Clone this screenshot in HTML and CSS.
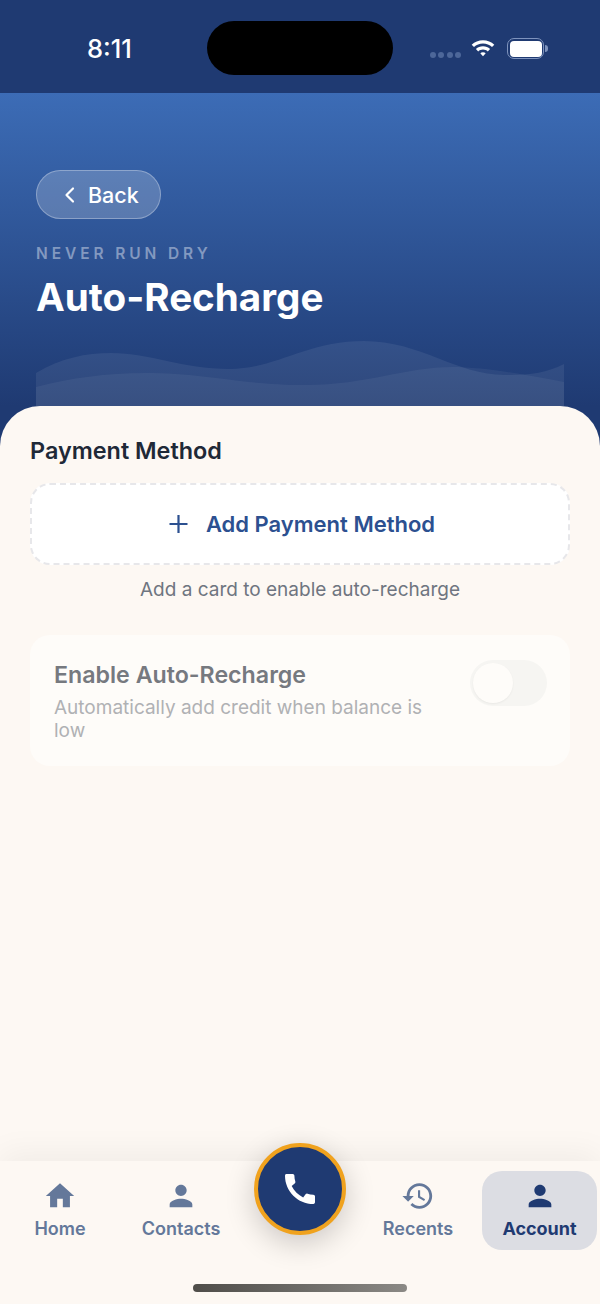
FILE: index.html
```html
<!DOCTYPE html>
<html lang="en">
<head>
    <meta charset="UTF-8">
    <meta name="viewport" content="width=device-width, initial-scale=1.0">
    <title>Auto-Recharge</title>
    <link rel="stylesheet" href="styles.css">
</head>
<body>
    <div class="app">
        <div class="status-bar">
            <span class="status-time">8:11</span>
            <div class="island"></div>
            <div class="status-icons">
                <div class="signal"><i></i><i></i><i></i><i></i></div>
                <svg class="wifi" width="26" height="20" viewBox="0 0 26 20">
                    <path d="M13 2.200c4.400 0 8.400 1.700 11.300 4.500l-2.300 2.400C19.700 6.900 16.500 5.600 13 5.600S6.300 6.900 4 9.100L1.700 6.700C4.600 3.900 8.600 2.200 13 2.200z" fill="#fff"/>
                    <path d="M13 8.300c2.800 0 5.200 1 7.100 2.800l-2.300 2.400c-1.300-1.200-3-1.900-4.800-1.900s-3.500.7-4.800 1.900l-2.300-2.400c1.900-1.800 4.300-2.800 7.100-2.800z" fill="#fff"/>
                    <path d="M13 14.200c1.100 0 2 .4 2.700 1L13 18.200l-2.700-3c.7-.6 1.600-1 2.700-1z" fill="#fff"/>
                </svg>
                <div class="battery"><div class="battery-fill"></div></div>
                <div class="battery-cap"></div>
            </div>
        </div>

        <header class="hero">
            <a class="back-button">
                <svg width="14" height="18" viewBox="0 0 14 18"><path d="M10 2.500 3.500 9l6.500 6.500" fill="none" stroke="#fff" stroke-width="2.200" stroke-linecap="round" stroke-linejoin="round"/></svg>
                <span>Back</span>
            </a>
            <div class="eyebrow">NEVER RUN DRY</div>
            <h1 class="hero-title">Auto-Recharge</h1>
            <svg class="waves" viewBox="0 0 528 66" preserveAspectRatio="none">
                <path d="M0 33C25 18 50 13 75 13c40 0 70 16 119 16 46 0 76-28 134-28 57 0 92 34 141 34 26 0 41-2 59-11v42H0z" fill="#fff" fill-opacity=".07"/>
                <path d="M0 47c35-9 70-14 109-14 61 0 96 12 161 12 60 0 100-18 146-18 34 0 74 8 112 15v24H0z" fill="#fff" fill-opacity=".05"/>
            </svg>
        </header>

        <main class="sheet">
            <h2 class="section-title">Payment Method</h2>
            <button class="add-card">
                <svg width="20" height="20" viewBox="0 0 20 20"><path d="M9.500 1v18M.5 10h18" stroke="#2c5090" stroke-width="2.200" fill="none"/></svg>
                <span>Add Payment Method</span>
            </button>
            <p class="hint">Add a card to enable auto-recharge</p>

            <section class="setting-card">
                <div class="setting-text">
                    <div class="setting-title">Enable Auto-Recharge</div>
                    <div class="setting-desc">Automatically add credit when balance is low</div>
                </div>
                <div class="toggle"><div class="toggle-knob"></div></div>
            </section>
        </main>

        <nav class="tab-bar">
            <a class="tab">
                <svg width="34" height="34" viewBox="0 0 24 24"><path d="M10 20v-6h4v6h5v-8h3L12 3 2 12h3v8z"/></svg>
                <span>Home</span>
            </a>
            <a class="tab">
                <svg width="34" height="34" viewBox="0 0 24 24"><path d="M12 12c2.210 0 4-1.790 4-4s-1.790-4-4-4-4 1.790-4 4 1.790 4 4 4zm0 2c-2.670 0-8 1.340-8 4v2h16v-2c0-2.660-5.330-4-8-4z"/></svg>
                <span>Contacts</span>
            </a>
            <div class="tab-spacer"></div>
            <a class="tab">
                <svg width="34" height="34" viewBox="0 0 24 24"><path d="M13 3c-4.970 0-9 4.030-9 9H1l3.890 3.890.07.140L9 12H6c0-3.870 3.130-7 7-7s7 3.130 7 7-3.130 7-7 7c-1.930 0-3.680-.79-4.940-2.060l-1.420 1.420C8.270 19.990 10.510 21 13 21c4.970 0 9-4.030 9-9s-4.030-9-9-9zm-1 5v5l4.280 2.540.72-1.210-3.500-2.080V8H12z"/></svg>
                <span>Recents</span>
            </a>
            <a class="tab active">
                <svg width="34" height="34" viewBox="0 0 24 24"><path d="M12 12c2.210 0 4-1.790 4-4s-1.790-4-4-4-4 1.790-4 4 1.790 4 4 4zm0 2c-2.670 0-8 1.340-8 4v2h16v-2c0-2.660-5.330-4-8-4z"/></svg>
                <span>Account</span>
            </a>
            <button class="call-button">
                <svg width="40" height="40" viewBox="0 0 24 24"><path d="M20.010 15.380c-1.230 0-2.420-.2-3.530-.56-.35-.12-.74-.03-1.010.24l-1.570 1.970c-2.830-1.350-5.480-3.900-6.890-6.830l1.950-1.660c.27-.28.35-.67.24-1.020-.37-1.110-.56-2.300-.56-3.530 0-.54-.45-.99-.99-.99H4.190C3.650 3 3 3.240 3 3.990 3 13.280 10.730 21 20.010 21c.71 0 .99-.63.99-1.180v-3.450c0-.54-.45-.99-.99-.99z" fill="#fff"/></svg>
            </button>
            <div class="home-indicator"></div>
        </nav>
    </div>
</body>
</html>
```

FILE: styles.css
```css
* {
    box-sizing: border-box;
}

body {
    font-family: Inter, "Liberation Sans", sans-serif;
    background-color: #fdf8f3;
    margin: 0;
}

.app {
    display: flex;
    flex-direction: column;
    width: 600px;
    height: 1304px;
    overflow: hidden;
    position: relative;
}

/* status bar */
.status-bar {
    display: flex;
    align-items: center;
    height: 93px;
    padding: 4px 52px 0 87px;
    background-color: #1f3a72;
    color: #fff;
    position: relative;
}

.status-time {
    font-size: 25.500px;
    font-weight: 500;
    line-height: 30px;
}

.island {
    position: absolute;
    top: 21px;
    left: 207px;
    width: 186px;
    height: 54px;
    border-radius: 27px;
    background-color: #000;
}

.status-icons {
    display: flex;
    align-items: center;
    margin-left: auto;
}

.signal {
    display: flex;
    gap: 2.500px;
    margin-top: 13px;
    margin-right: 9px;
}

.signal i {
    width: 6px;
    height: 6px;
    border-radius: 50%;
    background-color: #4d6799;
}

.wifi {
    margin-right: 11px;
    margin-bottom: 1px;
}

.battery {
    width: 37px;
    height: 21px;
    border: 1.500px solid #7e93bd;
    border-radius: 7px;
    padding: 1.500px;
}

.battery-fill {
    height: 100%;
    border-radius: 4px;
    background-color: #fff;
}

.battery-cap {
    width: 3px;
    height: 7px;
    margin-left: 1px;
    border-radius: 0 3px 3px 0;
    background-color: #7e93bd;
}

/* hero */
.hero {
    height: 360px;
    padding: 77px 36px 0;
    background: linear-gradient(180deg, #3c6cb6 0%, #1f3a72 87%);
    position: relative;
    flex-shrink: 0;
}

.back-button {
    display: inline-flex;
    align-items: center;
    gap: 11px;
    width: 125px;
    height: 49px;
    padding-left: 26px;
    border: 1.500px solid rgba(255, 255, 255, 0.3);
    border-radius: 25px;
    background-color: rgba(255, 255, 255, 0.2);
    color: #fff;
    font-size: 21.500px;
    font-weight: 500;
}

.eyebrow {
    margin-top: 25px;
    color: #8399c0;
    font-size: 15.500px;
    font-weight: 600;
    letter-spacing: 3.900px;
    line-height: 20px;
}

.hero-title {
    margin: 10px 0 0;
    color: #fff;
    font-size: 38.600px;
    font-weight: 700;
    line-height: 46px;
}

.waves {
    position: absolute;
    left: 36px;
    bottom: 47px;
    width: 528px;
    height: 66px;
}

/* sheet */
.sheet {
    flex: 1;
    margin-top: -47px;
    padding: 30px 30px 0;
    border-radius: 40px 40px 0 0;
    background-color: #fdf8f3;
    position: relative;
}

.section-title {
    margin: 0 0 18px;
    color: #1f2937;
    font-size: 23.400px;
    font-weight: 600;
    line-height: 29px;
}

.add-card {
    display: flex;
    align-items: center;
    justify-content: center;
    gap: 17px;
    width: 100%;
    height: 82px;
    padding: 0 0 0 4px;
    border: 2px dashed #e7e7ea;
    border-radius: 20px;
    background-color: #fff;
    color: #2c5090;
    font-family: inherit;
    font-size: 22px;
    font-weight: 600;
}

.hint {
    margin: 13px 0 0;
    color: #6f7580;
    font-size: 19px;
    line-height: 23px;
    text-align: center;
}

.setting-card {
    display: flex;
    justify-content: space-between;
    margin-top: 34px;
    height: 131px;
    padding: 25px 23px 0 24px;
    border-radius: 20px;
    background-color: #fefcf9;
}

.setting-text {
    width: 400px;
}

.setting-title {
    color: #76797f;
    font-size: 23.200px;
    font-weight: 600;
    line-height: 30px;
}

.setting-desc {
    margin-top: 6px;
    color: #b0b1b4;
    font-size: 19px;
    line-height: 23px;
}

.toggle {
    width: 77px;
    height: 46px;
    padding: 3px;
    border-radius: 23px;
    background-color: #f6f5f2;
}

.toggle-knob {
    width: 40px;
    height: 40px;
    border-radius: 50%;
    background-color: #fefcf9;
    box-shadow: 0 1px 2px rgba(0, 0, 0, 0.05);
}

/* tab bar */
.tab-bar {
    display: grid;
    grid-template-columns: 120px 122px 118px 116px 121px;
    align-items: start;
    height: 143px;
    padding-top: 10px;
    background-color: #fdf8f3;
    box-shadow: 0 -8px 30px rgba(0, 0, 0, 0.05);
    position: relative;
    flex-shrink: 0;
}

.tab {
    display: flex;
    flex-direction: column;
    align-items: center;
    height: 79px;
    padding-top: 8px;
    color: #64789a;
    font-size: 18px;
    font-weight: 600;
    line-height: 22px;
}

.tab svg {
    fill: #64789a;
    margin-bottom: 5px;
}

.tab.active {
    margin-left: 6px;
    border-radius: 20px;
    background-color: #dcdde3;
    color: #1f3a72;
    font-weight: 700;
}

.tab.active svg {
    fill: #1f3a72;
}

.call-button {
    display: flex;
    align-items: center;
    justify-content: center;
    position: absolute;
    top: -18px;
    left: 254px;
    width: 92px;
    height: 92px;
    padding: 0;
    border: 4.500px solid #f0a21e;
    border-radius: 50%;
    background-color: #1f3a72;
    box-shadow: 0 8px 30px rgba(0, 0, 0, 0.2);
}

.home-indicator {
    position: absolute;
    left: 193px;
    bottom: 12px;
    width: 214px;
    height: 8px;
    border-radius: 4px;
    background: linear-gradient(90deg, #4f4d49 0%, #6c6a66 50%, #8b8985 100%);
}
```
